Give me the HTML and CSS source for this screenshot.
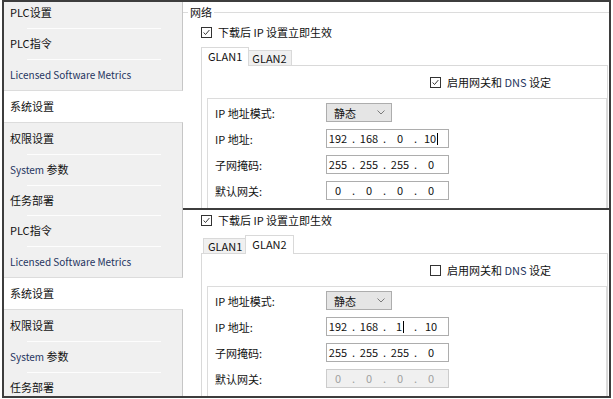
FILE: index.html
```html
<!DOCTYPE html>
<html lang="zh-CN">

<head>
    <meta charset="UTF-8">
    <meta name="viewport" content="width=device-width, initial-scale=1.0">
    <title>网络设置</title>
    <link rel="stylesheet" href="styles.css">
</head>

<body>
    <div class="frame">
        <!-- GLAN1 -->
        <section class="panel">
            <nav class="side">
                <div class="side-list">
                    <div class="side-group">
                        <div class="side-item">PLC设置</div>
                        <div class="side-item">PLC指令</div>
                        <div class="side-item en small">Licensed Software Metrics</div>
                    </div>
                    <div class="side-item current">系统设置</div>
                    <div class="side-group">
                        <div class="side-item">权限设置</div>
                        <div class="side-item"><span class="en small">System</span> 参数</div>
                        <div class="side-item">任务部署</div>
                    </div>
                </div>
            </nav>
            <div class="content">
                <fieldset class="net">
                    <legend>网络</legend>
                    <div class="net-body">
                        <label class="check">
                            <span class="box"><svg viewBox="0 0 11 11"><path d="M2 5.5 4.3 8 9 2.5" /></svg></span>
                            <span>下载后 IP 设置立即生效</span>
                        </label>
                        <div class="tabs">
                            <span class="tab active">GLAN1</span>
                            <span class="tab">GLAN2</span>
                        </div>
                        <div class="tab-pane">
                            <label class="check dns">
                                <span class="box"><svg viewBox="0 0 11 11"><path d="M2 5.5 4.3 8 9 2.5" /></svg></span>
                                <span>启用网关和 <span class="en">DNS</span> 设定</span>
                            </label>
                            <div class="ip-box">
                                <div class="row">
                                    <span class="lbl">IP 地址模式:</span>
                                    <span class="select">静态<svg viewBox="0 0 8 5"><path d="M.5.5 4 4 7.5.5" /></svg></span>
                                </div>
                                <div class="row">
                                    <span class="lbl">IP 地址:</span>
                                    <span class="ip"><span>192</span><i>.</i><span>168</span><i>.</i><span>0</span><i>.</i><span>10<b class="caret"></b></span></span>
                                </div>
                                <div class="row">
                                    <span class="lbl">子网掩码:</span>
                                    <span class="ip"><span>255</span><i>.</i><span>255</span><i>.</i><span>255</span><i>.</i><span>0</span></span>
                                </div>
                                <div class="row">
                                    <span class="lbl">默认网关:</span>
                                    <span class="ip"><span>0</span><i>.</i><span>0</span><i>.</i><span>0</span><i>.</i><span>0</span></span>
                                </div>
                            </div>
                        </div>
                    </div>
                </fieldset>
            </div>
        </section>

        <!-- GLAN2 -->
        <section class="panel panel-bottom">
            <nav class="side">
                <div class="side-list">
                    <div class="side-group">
                        <div class="side-item">PLC设置</div>
                        <div class="side-item">PLC指令</div>
                        <div class="side-item en small">Licensed Software Metrics</div>
                    </div>
                    <div class="side-item current">系统设置</div>
                    <div class="side-group">
                        <div class="side-item">权限设置</div>
                        <div class="side-item"><span class="en small">System</span> 参数</div>
                        <div class="side-item">任务部署</div>
                    </div>
                </div>
            </nav>
            <div class="content">
                <fieldset class="net">
                    <legend>网络</legend>
                    <div class="net-body">
                        <label class="check">
                            <span class="box"><svg viewBox="0 0 11 11"><path d="M2 5.5 4.3 8 9 2.5" /></svg></span>
                            <span>下载后 IP 设置立即生效</span>
                        </label>
                        <div class="tabs">
                            <span class="tab">GLAN1</span>
                            <span class="tab active">GLAN2</span>
                        </div>
                        <div class="tab-pane">
                            <label class="check dns">
                                <span class="box"></span>
                                <span>启用网关和 <span class="en">DNS</span> 设定</span>
                            </label>
                            <div class="ip-box">
                                <div class="row">
                                    <span class="lbl">IP 地址模式:</span>
                                    <span class="select">静态<svg viewBox="0 0 8 5"><path d="M.5.5 4 4 7.5.5" /></svg></span>
                                </div>
                                <div class="row">
                                    <span class="lbl">IP 地址:</span>
                                    <span class="ip"><span>192</span><i>.</i><span>168</span><i>.</i><span>1<b class="caret"></b></span><i>.</i><span>10</span></span>
                                </div>
                                <div class="row">
                                    <span class="lbl">子网掩码:</span>
                                    <span class="ip"><span>255</span><i>.</i><span>255</span><i>.</i><span>255</span><i>.</i><span>0</span></span>
                                </div>
                                <div class="row">
                                    <span class="lbl">默认网关:</span>
                                    <span class="ip disabled"><span>0</span><i>.</i><span>0</span><i>.</i><span>0</span><i>.</i><span>0</span></span>
                                </div>
                            </div>
                        </div>
                    </div>
                </fieldset>
            </div>
        </section>
    </div>
</body>

</html>
```

FILE: styles.css
```css
* {
    margin: 0;
    padding: 0;
    box-sizing: border-box;
}

body {
    font-family: "Noto Sans CJK SC", "Noto Sans", sans-serif;
    font-size: 11px;
    color: #111;
    background: #fff;
}

.frame {
    margin: 0 2px;
    width: 609px;
    height: 398px;
    border: 2px solid #3d3d3d;
    display: flex;
    flex-direction: column;
    background: #fff;
}

.panel {
    display: flex;
    height: 206px;
    overflow: hidden;
    flex: none;
}

.panel-bottom {
    height: 188px;
}

/* left navigation */
.side {
    width: 179px;
    flex: none;
    overflow: hidden;
}

.side-list {
    margin-top: -6px;
}

.panel-bottom .side-list {
    margin-top: -25px;
}

.side-group {
    background: #f0f0f0;
    border-top: 1px solid #dcdcdc;
    border-right: 1px solid #c6c6c6;
    border-bottom: 1px solid #dcdcdc;
}

.side-item {
    height: 31px;
    line-height: 31px;
    padding-left: 6px;
    white-space: nowrap;
}

.side-item + .side-item {
    background: linear-gradient(#fdfdfd, #fdfdfd) no-repeat 23px 0 / 134px 1px;
}

.side-item.current {
    background: #fff;
}

.en {
    color: #1f3460;
}

.small {
    font-size: 10px;
}

/* right content */
.content {
    flex: 1;
    min-width: 0;
    overflow: hidden;
}

.panel-bottom .content {
    border-top: 2px solid #3d3d3d;
}

.net {
    margin-top: 2px;
    border: none;
    border-top: 1px solid #dcdcdc;
    min-width: 0;
}

.panel-bottom .net {
    margin-top: -18px;
}

.net legend {
    margin-left: 5px;
    padding: 0 2px;
    line-height: 17px;
}

.net-body {
    padding: 2px 1px 0 18px;
}

.check {
    display: flex;
    align-items: center;
    height: 18px;
    gap: 6px;
    white-space: nowrap;
}

.box {
    width: 11px;
    height: 11px;
    border: 1px solid #333;
    display: flex;
    background: #fff;
}

.box svg {
    width: 9px;
    height: 9px;
    fill: none;
    stroke: #333;
    stroke-width: 1.2;
}

/* tabs */
.tabs {
    display: flex;
    align-items: flex-end;
    height: 18px;
    margin-top: 6px;
    padding-left: 2px;
}

.tab {
    height: 15px;
    line-height: 14px;
    padding: 0 4px;
    background: #f0f0f0;
    border: 1px solid #d9d9d9;
    border-bottom: none;
}

.tab.active {
    height: 19px;
    line-height: 17px;
    margin: 0 -2px -1px;
    padding: 0 6px;
    background: #fff;
    position: relative;
}

.tab-pane {
    border: 1px solid #d9d9d9;
    border-bottom: none;
    padding-top: 7px;
    height: 200px;
}

.dns {
    padding-left: 228px;
}

.ip-box {
    margin: 7px 0 0 5px;
    border: 1px solid #dcdcdc;
    border-bottom: none;
    padding: 4px 0 20px 7px;
    display: flex;
    flex-direction: column;
    gap: 7px;
}

.row {
    display: flex;
    align-items: center;
    height: 19px;
}

.lbl {
    width: 111px;
    flex: none;
}

.select {
    width: 66px;
    height: 19px;
    background: #e5e5e5;
    border: 1px solid #adadad;
    display: flex;
    align-items: center;
    justify-content: space-between;
    padding: 0 6px 0 7px;
}

.select svg {
    width: 8px;
    height: 5px;
    fill: none;
    stroke: #7a7a7a;
}

.ip {
    width: 123px;
    height: 19px;
    border: 1px solid #adadad;
    display: grid;
    grid-template-columns: 22px 9px 22px 9px 22px 9px 22px;
    align-items: center;
    line-height: 17px;
    text-align: center;
}

.ip i {
    font-style: normal;
}

.ip.disabled {
    background: #f0f0f0;
    border-color: #cccccc;
    color: #a0a0a0;
}

.caret {
    display: inline-block;
    width: 1px;
    height: 12px;
    margin-left: 1px;
    background: #000;
    vertical-align: -2px;
}
```
